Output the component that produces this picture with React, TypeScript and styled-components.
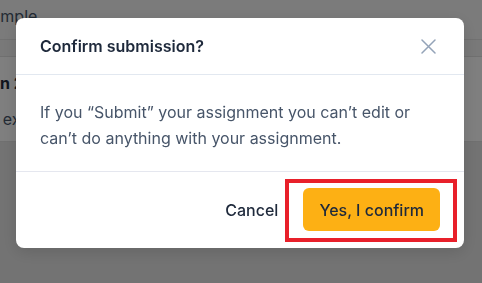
import React from "react";
import styled, { createGlobalStyle } from "styled-components";

const Global = createGlobalStyle`
  html, body { margin: 0; padding: 0; }
  body {
    width: 482px;
    height: 283px;
    overflow: hidden;
    font-family: Inter, "Noto Sans", sans-serif;
    background: #e6e6e6;
  }
`;

const Page = styled.div`
  display: flex;
  flex-direction: column;
  width: 482px;
  height: 283px;
  overflow: hidden;
`;

const TopBar = styled.div`
  height: 40px;
  background: #f6f6f6;
  border-bottom: 1px solid #e2e2e2;
  display: flex;
  align-items: flex-start;
  padding-top: 6px;
  box-sizing: border-box;
`;

const Band = styled.div`
  height: 16px;
  background: #f2f2f2;
  border-bottom: 1px solid #e0e0e0;
`;

const Card = styled.div`
  height: 85px;
  box-sizing: border-box;
  background: #ffffff;
  border-bottom: 1px solid #e0e0e0;
  display: flex;
  flex-direction: column;
  padding-top: 16px;
  gap: 16px;
`;

const BgText = styled.span<{ $shift: number; $bold?: boolean }>`
  margin-left: ${(p) => p.$shift}px;
  font-size: 16px;
  line-height: 20px;
  color: ${(p) => (p.$bold ? "#1e293b" : "#475569")};
  font-weight: ${(p) => (p.$bold ? 700 : 400)};
  white-space: nowrap;
`;

const Overlay = styled.div`
  position: fixed;
  inset: 0;
  background: rgba(0, 0, 0, 0.5);
  display: flex;
  justify-content: flex-start;
  align-items: flex-start;
  padding: 18px 0 0 16px;
`;

const Modal = styled.div`
  width: 448px;
  background: #ffffff;
  border-radius: 8px;
  box-shadow: 0 4px 16px rgba(0, 0, 0, 0.12);
  display: flex;
  flex-direction: column;
`;

const Header = styled.div`
  display: flex;
  align-items: center;
  justify-content: space-between;
  padding: 16px 28px 16px 24px;
  border-bottom: 1px solid #e2e8f0;
`;

const Title = styled.h2`
  margin: 0;
  font-size: 16px;
  line-height: 24px;
  font-weight: 600;
  color: #1e293b;
`;

const CloseButton = styled.button`
  border: 0;
  background: transparent;
  padding: 0;
  width: 16px;
  height: 16px;
  display: flex;
  align-items: center;
  justify-content: center;
  color: #94a3b8;
  cursor: pointer;
`;

const Body = styled.div`
  padding: 24px 24px 20px 24px;
  border-bottom: 1px solid #e5e7ef;
`;

const Text = styled.p`
  margin: 0;
  font-size: 16px;
  line-height: 26px;
  color: #475569;
`;

const Footer = styled.div`
  display: flex;
  justify-content: flex-end;
  align-items: center;
  gap: 25px;
  padding: 16px 24px 17px 24px;
`;

const CancelButton = styled.button`
  border: 0;
  background: transparent;
  padding: 0;
  font-family: inherit;
  font-size: 16px;
  font-weight: 500;
  color: #1e293b;
  cursor: pointer;
`;

const ConfirmWrap = styled.div`
  position: relative;
  display: flex;
`;

const ConfirmButton = styled.button`
  height: 43px;
  padding: 0 16px;
  border: 0;
  border-radius: 6px;
  background: #fdb014;
  font-family: inherit;
  font-size: 16px;
  font-weight: 500;
  color: #1e293b;
  cursor: pointer;
  white-space: nowrap;
`;

const Highlight = styled.span`
  position: absolute;
  top: -9px;
  bottom: -11px;
  left: -18px;
  right: -17px;
  border: 4px solid #e8202a;
  pointer-events: none;
`;

export default function App() {
  return (
    <>
      <Global />
      <Page>
        <TopBar>
          <BgText $shift={-27}>Example</BgText>
        </TopBar>
        <Band />
        <Card>
          <BgText $shift={-61} $bold>
            Question 2
          </BgText>
          <BgText $shift={-34}>Text example</BgText>
        </Card>
      </Page>
      <Overlay>
        <Modal>
          <Header>
            <Title>Confirm submission?</Title>
            <CloseButton aria-label="Close">
              <svg width="15" height="15" viewBox="0 0 15 15" fill="none">
                <path
                  d="M1 1L14 14M14 1L1 14"
                  stroke="currentColor"
                  strokeWidth="1.5"
                  strokeLinecap="round"
                />
              </svg>
            </CloseButton>
          </Header>
          <Body>
            <Text>
              If you “Submit” your assignment you can’t edit or can’t do anything with your
              assignment.
            </Text>
          </Body>
          <Footer>
            <CancelButton>Cancel</CancelButton>
            <ConfirmWrap>
              <ConfirmButton>Yes, I confirm</ConfirmButton>
              <Highlight />
            </ConfirmWrap>
          </Footer>
        </Modal>
      </Overlay>
    </>
  );
}
